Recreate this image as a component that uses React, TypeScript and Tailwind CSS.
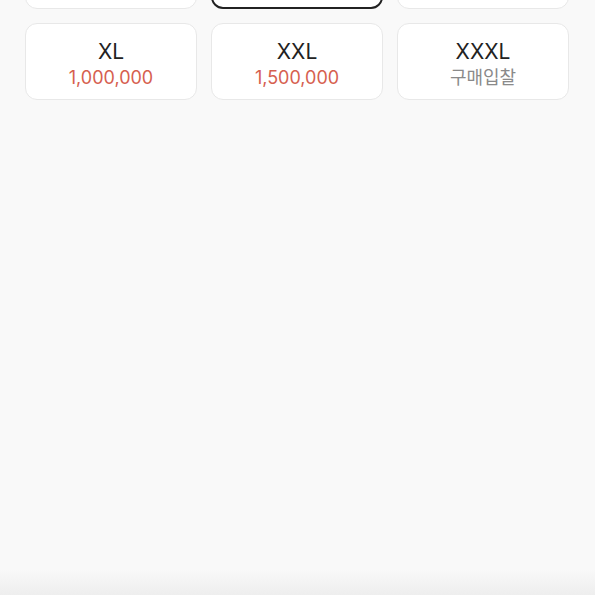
import React from "react";

type Size = { label: string; price?: string };

const sizes: Size[] = [
  { label: "S", price: "900,000" },
  { label: "M", price: "950,000" },
  { label: "L", price: "980,000" },
  { label: "XL", price: "1,000,000" },
  { label: "XXL", price: "1,500,000" },
  { label: "XXXL" },
];

export default function App() {
  return (
    <div
      className="relative w-[595px] h-[595px] overflow-hidden bg-[#f9f9f9]"
      style={{ fontFamily: 'Inter, "Noto Sans", "Noto Sans CJK KR", sans-serif' }}
    >
      <div className="grid grid-cols-3 gap-x-[14px] gap-y-[14px] pl-[25px] pr-[26px] -mt-[68px]">
        {sizes.map((s, i) => {
          const selected = i === 1;
          return (
            <div
              key={s.label}
              className={
                selected
                  ? "h-[77px] rounded-[12px] border-2 border-[#222222] bg-white flex flex-col items-center justify-center"
                  : "h-[77px] rounded-[12px] border border-[#e8e8e8] bg-white flex flex-col items-center justify-center"
              }
            >
              <div className="text-[21px] leading-[26px] text-[#222222] mt-[5px]">{s.label}</div>
              {s.price ? (
                <div className="text-[18px] leading-[24px] mt-[1px] text-[#d6604f]">{s.price}</div>
              ) : (
                <div className="text-[18px] leading-[24px] mt-[1px] text-[#8a8a8a]">구매입찰</div>
              )}
            </div>
          );
        })}
      </div>
      <div className="absolute left-0 right-0 bottom-0 h-[26px] bg-gradient-to-b from-[#f9f9f9] to-[#eeeeee]" />
    </div>
  );
}
